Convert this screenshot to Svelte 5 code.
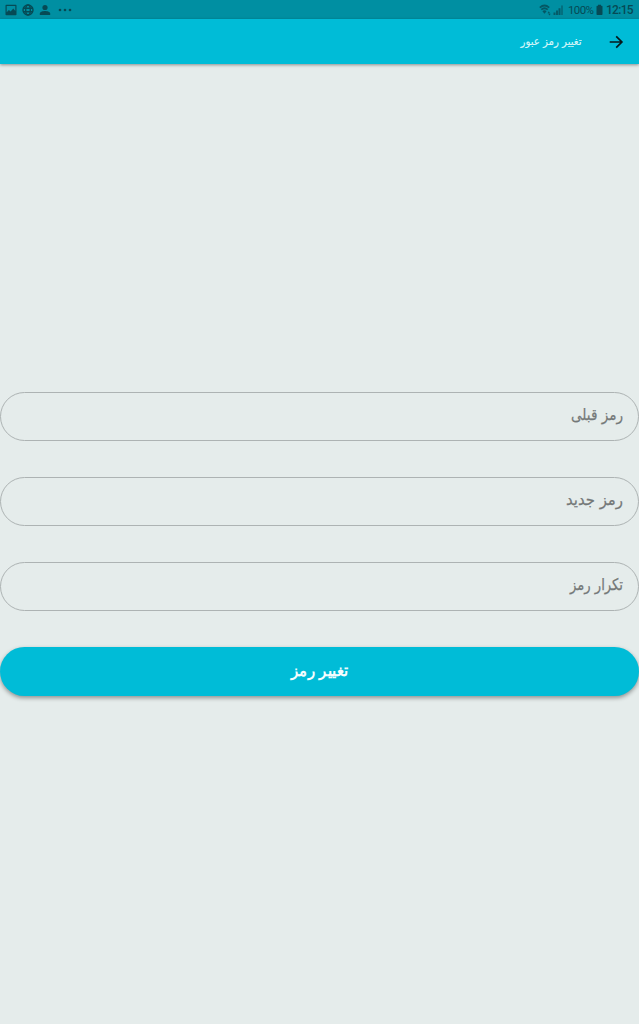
<script lang="ts">
	interface Field {
		id: string;
		label: string;
		width: number;
	}

	const fields: Field[] = [
		{ id: 'old', label: 'رمز قبلی', width: 52 },
		{ id: 'new', label: 'رمز جدید', width: 57 },
		{ id: 'repeat', label: 'تکرار رمز', width: 53 }
	];
</script>

<div class="screen">
	<div class="status">
		<div class="group">
			<svg class="picture" width="12" height="12" viewBox="0 0 12 12">
				<path fill-rule="evenodd" d="M1.3.8h9.4q.8 0 .8.8v8.800q0 .8-.8.8H1.300q-.8 0-.8-.8V1.600q0-.8.8-.8zM1.700 2v6.300l2.200-2.400 1.700 1.700 2.700-3.200 2 2.600V2z" />
			</svg>
			<svg class="globe" width="12" height="12" viewBox="0 0 12 12">
				<circle cx="6" cy="6" r="5" />
				<ellipse cx="6" cy="6" rx="2.300" ry="5" />
				<path d="M1.200 4.200h9.600M1.200 7.800h9.600" />
			</svg>
			<svg class="person" width="12" height="12" viewBox="0 0 12 12">
				<circle cx="6" cy="3.500" r="2.600" />
				<path d="M.8 11V9.500C.8 7.900 3.500 7 6 7s5.200.9 5.200 2.500V11z" />
			</svg>
			<svg class="more" width="14" height="12" viewBox="0 0 14 12">
				<circle cx="2" cy="6" r="1.350" />
				<circle cx="7" cy="6" r="1.350" />
				<circle cx="12" cy="6" r="1.350" />
			</svg>
		</div>
		<div class="group">
			<svg class="wifi" width="13" height="12" viewBox="0 0 13 12">
				<path class="arc" d="M.8 3.600Q5.500-.6 10.200 3.600M2.300 5.600q3.200-2.700 6.400 0" />
				<path d="M3.400 7.200q2.100-1.700 4.200 0L5.500 9.800zM8.500 9.200l1.300-2 1.200 2zM9.200 9.800h2.500l-1.200 1.700z" />
			</svg>
			<svg class="signal" width="11" height="12" viewBox="0 0 11 12">
				<path d="M.5 8.500h2V11h-2zM3 6.500h2V11H3zM5.500 4.300h2V11h-2z" />
				<path class="faint" d="M8 1.500h2V11H8z" />
			</svg>
			<span class="percent">100%</span>
			<svg class="battery" width="7" height="12" viewBox="0 0 7 12">
				<path d="M2 .8h3v1h.7q.8 0 .8.8v7.600q0 .8-.8.8H1.300q-.8 0-.8-.8V2.600q0-.8.8-.8H2z" />
			</svg>
			<span class="time">12:15</span>
		</div>
	</div>

	<header dir="rtl">
		<button class="back" aria-label="بازگشت">
			<svg width="14" height="14" viewBox="0 0 14 14">
				<path d="M.7 7h11.800M7.200 1.300 12.900 7l-5.700 5.700" />
			</svg>
		</button>
		<svg class="title" width="62" height="24" role="heading" aria-level="1">
			<text x="61.500" y="15" textLength="61" lengthAdjust="spacingAndGlyphs">تغییر رمز عبور</text>
		</svg>
	</header>

	<main dir="rtl">
		{#each fields as field (field.id)}
			<div class="field">
				<svg width={field.width} height="32">
					<text x={field.width} y="19" textLength={field.width} lengthAdjust="spacingAndGlyphs">{field.label}</text>
				</svg>
			</div>
		{/each}
		<button class="submit">
			<svg width="58" height="32">
				<text x="57" y="20" textLength="57" lengthAdjust="spacingAndGlyphs">تغییر رمز</text>
			</svg>
		</button>
	</main>
</div>

<style>
	:global(body) {
		background: #e5eceb;
	}

	.screen {
		display: flex;
		flex-direction: column;
		height: 1024px;
		overflow: hidden;
		background: #e5eceb;
		font-family: 'DejaVu Sans', sans-serif;
	}

	svg {
		display: block;
		flex: none;
		overflow: visible;
	}

	.status {
		display: flex;
		align-items: center;
		justify-content: space-between;
		box-sizing: border-box;
		height: 19px;
		padding: 1px 6px 0 5px;
		background: #008fa2;
		color: #064a55;
		font: 12px/18px Roboto, sans-serif;
	}

	.status svg {
		fill: #064a55;
	}

	.group {
		display: flex;
		align-items: center;
	}

	.status .globe {
		margin-left: 5px;
		fill: none;
		stroke: #064a55;
		stroke-width: 1.4;
	}

	.person {
		margin-left: 5px;
	}

	.status .more {
		margin-left: 7px;
	}

	.wifi .arc {
		fill: none;
		stroke: #064a55;
		stroke-width: 1.7;
	}

	.wifi {
		opacity: 0.8;
	}

	.signal {
		margin-left: 1px;
		opacity: 0.75;
	}

	.faint {
		opacity: 0.6;
	}

	.percent {
		width: 25px;
		margin-left: 4px;
		font-size: 11.5px;
		letter-spacing: -0.6px;
		white-space: nowrap;
	}

	.battery {
		margin-left: 3px;
	}

	.time {
		width: 27px;
		margin-left: 3px;
		font-size: 12px;
		font-weight: 500;
		letter-spacing: -0.7px;
	}

	header {
		display: flex;
		align-items: center;
		box-sizing: border-box;
		height: 45px;
		padding-right: 16px;
		background: #00bcd7;
		box-shadow: 0 1px 3px rgba(0, 0, 0, 0.4);
	}

	button {
		padding: 0;
		border: none;
		background: none;
	}

	.back path {
		fill: none;
		stroke: #06191c;
		stroke-width: 1.7;
	}

	.title {
		margin-right: 27px;
	}

	.title text {
		fill: #d9f7fa;
		stroke: #d9f7fa;
		stroke-width: 0.15;
		font-size: 11px;
	}

	main {
		display: flex;
		flex-direction: column;
		gap: 36px;
		padding-top: 328px;
	}

	.field {
		display: flex;
		align-items: center;
		box-sizing: border-box;
		height: 49px;
		padding-right: 15px;
		border: 1px solid #adb3b3;
		border-radius: 25px;
	}

	.field text {
		fill: #747878;
		stroke: #747878;
		stroke-width: 0.25;
		font-size: 16px;
	}

	.submit {
		display: flex;
		align-items: center;
		justify-content: center;
		height: 49px;
		border-radius: 25px;
		background: #00bcd7;
		box-shadow: 0 2px 4px rgba(0, 0, 0, 0.38);
	}

	.submit text {
		fill: #f4fdfe;
		font-size: 16px;
		font-weight: bold;
	}
</style>
